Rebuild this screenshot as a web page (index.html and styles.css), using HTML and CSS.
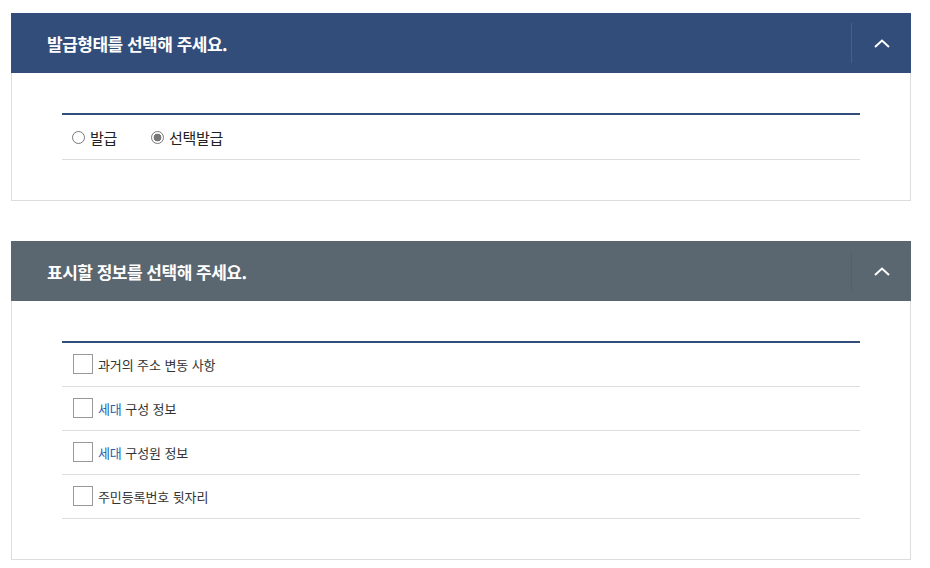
FILE: index.html
```html
<!DOCTYPE html>
<html lang="ko">
<head>
    <meta charset="UTF-8">
    <meta name="viewport" content="width=device-width, initial-scale=1.0">
    <title>발급 선택</title>
    <link rel="stylesheet" href="styles.css">
</head>
<body>
    <section class="panel">
        <div class="panel-head">
            <h2>발급형태를 선택해 주세요.</h2>
            <button class="toggle" type="button">
                <svg width="16" height="9" viewBox="0 0 16 9"><polyline points="1,8 8,1.5 15,8" fill="none" stroke="#fff" stroke-width="2"/></svg>
            </button>
        </div>
        <div class="panel-body">
            <ul class="option-list">
                <li class="radio-row">
                    <label><input type="radio" name="issueType" value="all"><span>발급</span></label>
                    <label><input type="radio" name="issueType" value="select" checked><span>선택발급</span></label>
                </li>
            </ul>
        </div>
    </section>

    <section class="panel">
        <div class="panel-head gray">
            <h2>표시할 정보를 선택해 주세요.</h2>
            <button class="toggle" type="button">
                <svg width="16" height="9" viewBox="0 0 16 9"><polyline points="1,8 8,1.5 15,8" fill="none" stroke="#fff" stroke-width="2"/></svg>
            </button>
        </div>
        <div class="panel-body">
            <ul class="option-list">
                <li><label><input type="checkbox"><span>과거의 주소 변동 사항</span></label></li>
                <li><label><input type="checkbox"><span><span class="blue">세대</span> 구성 정보</span></label></li>
                <li><label><input type="checkbox"><span><span class="blue">세대</span> 구성원 정보</span></label></li>
                <li><label><input type="checkbox"><span>주민등록번호 뒷자리</span></label></li>
            </ul>
        </div>
    </section>
</body>
</html>
```

FILE: styles.css
```css
body {
    font-family: "Noto Sans CJK KR", "Noto Sans", sans-serif;
    background-color: #fff;
    margin: 0;
    padding: 13px 20px 0 11px;
    color: #333;
}

.panel {
    width: 900px;
    margin-bottom: 40px;
}

.panel:last-child {
    margin-bottom: 0;
}

.panel-head {
    display: flex;
    align-items: center;
    height: 60px;
    padding-left: 36px;
    background-color: #334d7a;
}

.panel-head.gray {
    background-color: #5a6670;
}

.panel-head h2 {
    flex: 1;
    margin: 0;
    color: #fff;
    font-size: 17px;
    font-weight: bold;
    letter-spacing: -0.5px;
}

.toggle {
    display: flex;
    align-items: center;
    justify-content: center;
    width: 60px;
    height: 40px;
    padding: 0;
    background: none;
    border: none;
    border-left: 1px solid #46608c;
    cursor: pointer;
}

.panel-body {
    border: 1px solid #ddd;
    border-top: none;
    padding: 40px 50px 40px;
}

.option-list {
    list-style: none;
    margin: 0;
    padding: 0;
    border-top: 2px solid #334d7a;
}

.option-list li {
    display: flex;
    align-items: center;
    height: 43px;
    padding-left: 11px;
    border-bottom: 1px solid #ddd;
    font-size: 13px;
    letter-spacing: -0.1px;
}

.option-list li label {
    display: flex;
    align-items: center;
    gap: 5px;
    margin-top: -1px;
    cursor: pointer;
}

.option-list li.radio-row {
    height: 44px;
    gap: 34px;
    padding-left: 10px;
    font-size: 15px;
    letter-spacing: -0.3px;
    color: #222;
}

.option-list li.radio-row label {
    gap: 5px;
    margin-top: 0;
}

input[type="radio"] {
    appearance: none;
    width: 13px;
    height: 13px;
    margin: 0;
    border: 1px solid #777;
    border-radius: 50%;
    background: #fff;
}

input[type="radio"]:checked {
    background: radial-gradient(circle, #777 0 3.6px, #fff 4.2px);
}

input[type="checkbox"] {
    appearance: none;
    width: 20px;
    height: 20px;
    margin: 0;
    border: 1px solid #999;
    background: #fff;
}

.blue {
    color: #2462ad;
}
```
